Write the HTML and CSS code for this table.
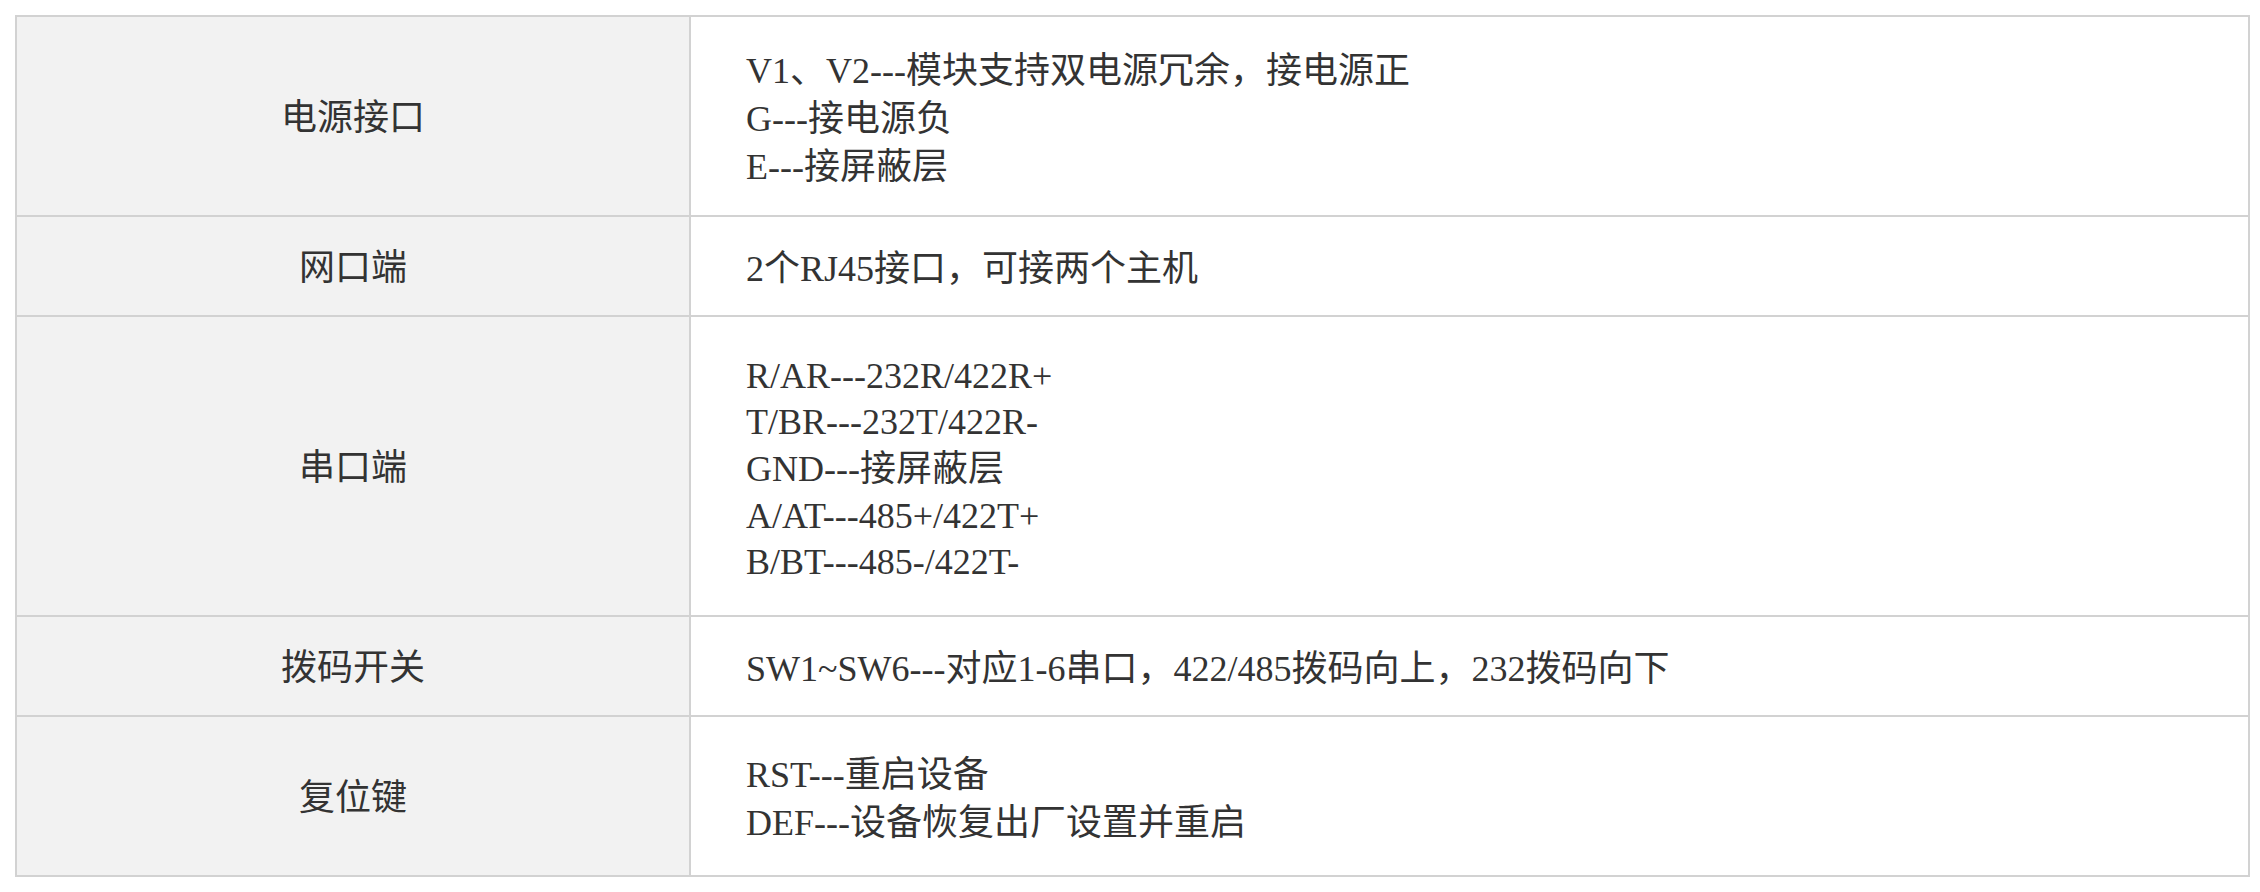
FILE: index.html
```html
<!DOCTYPE html>
<html lang="zh-CN">
<head>
<meta charset="utf-8">
<title>接口说明</title>
<link rel="stylesheet" href="styles.css">
</head>
<body>
<div class="spec">
  <div class="label">电源接口</div>
  <div class="desc">
    <div class="line">V1、V2---模块支持双电源冗余，接电源正</div>
    <div class="line">G---接电源负</div>
    <div class="line">E---接屏蔽层</div>
  </div>

  <div class="label">网口端</div>
  <div class="desc">
    <div class="line">2个RJ45接口，可接两个主机</div>
  </div>

  <div class="label">串口端</div>
  <div class="desc">
    <div class="line latin">R/AR---232R/422R+</div>
    <div class="line latin">T/BR---232T/422R-</div>
    <div class="line">GND---接屏蔽层</div>
    <div class="line latin">A/AT---485+/422T+</div>
    <div class="line latin">B/BT---485-/422T-</div>
  </div>

  <div class="label">拨码开关</div>
  <div class="desc">
    <div class="line">SW1~SW6---对应1-6串口，422/485拨码向上，232拨码向下</div>
  </div>

  <div class="label">复位键</div>
  <div class="desc">
    <div class="line">RST---重启设备</div>
    <div class="line">DEF---设备恢复出厂设置并重启</div>
  </div>
</div>
</body>
</html>
```

FILE: styles.css
```css
html, body {
  background: #ffffff;
}

body {
  margin: 15px 10px 15px 15px;
  font-family: "Liberation Serif", "Noto Sans CJK SC", serif;
  font-size: 36px;
  color: #333333;
}

.spec {
  display: grid;
  grid-template-columns: 672px 1fr;
  grid-template-rows: 198px 98px 298px 98px 158px;
  gap: 2px;
  border: 2px solid #d2d2d2;
  background: #d2d2d2;
}

.label {
  display: flex;
  align-items: center;
  justify-content: center;
  padding-top: 4px;
  background: #f2f2f2;
  line-height: 48px;
}

.desc {
  display: flex;
  flex-direction: column;
  justify-content: center;
  padding: 5px 0 0 55px;
  background: #ffffff;
}

.line {
  line-height: 48px;
  white-space: nowrap;
}

.line.latin {
  line-height: 46px;
}
```
